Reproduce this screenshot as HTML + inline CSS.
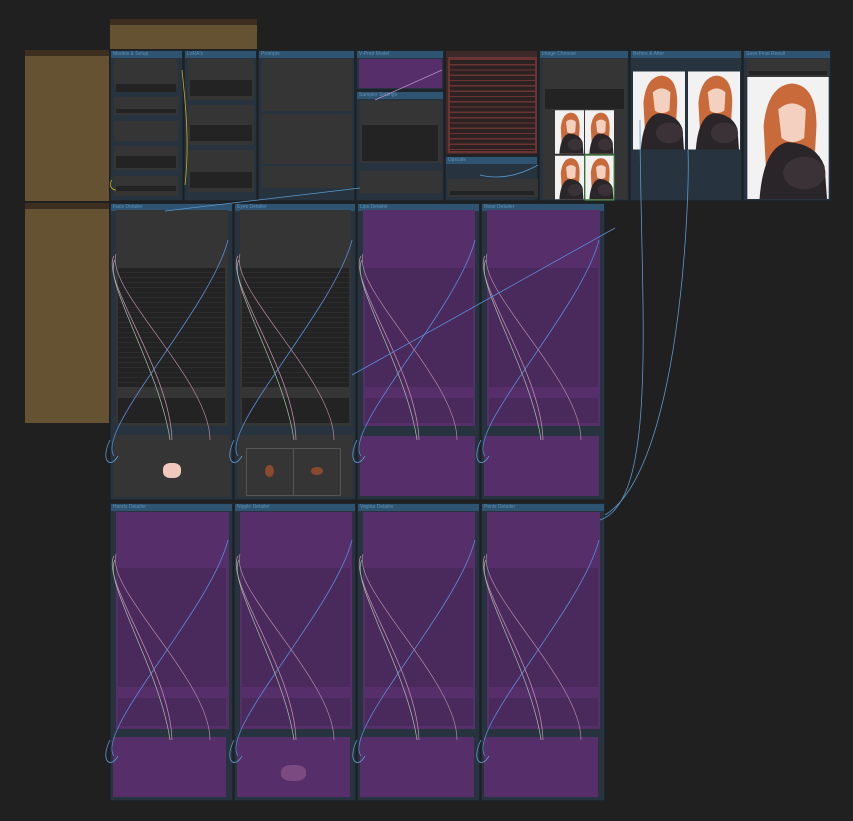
<!DOCTYPE html>
<html><head><meta charset="utf-8"><style>
*{margin:0;padding:0;box-sizing:border-box}
body{width:853px;height:821px;background:#202020;position:relative;overflow:hidden;font-family:"Liberation Sans",sans-serif}
div{position:absolute}
.br{background:#645233}
.brt{background:#3c2f1f}
.g{background:#27343f;border:1px solid #1d2730}
.gt{position:absolute;left:0;top:0;right:0;height:7px;background:#2f5471;color:#5c8fb5;font-size:5px;line-height:7px;padding-left:2px;white-space:nowrap;overflow:hidden}
.n{background:#353535}
.w{background:#232323}
.p{background:#552e6a}
.pi{background:#4a2a5c}
.img{background:#f2f2f2;overflow:hidden}
</style></head><body>
<!-- brown notes -->
<div class="br" style="left:110px;top:19px;width:147px;height:30px"></div>
<div class="brt" style="left:110px;top:19px;width:147px;height:6px"></div>
<div class="br" style="left:25px;top:50px;width:84px;height:151px"></div>
<div class="brt" style="left:25px;top:50px;width:84px;height:6px"></div>
<div class="br" style="left:25px;top:203px;width:84px;height:220px"></div>
<div class="brt" style="left:25px;top:203px;width:84px;height:6px"></div>

<!-- top row groups -->
<div class="g" style="left:110px;top:50px;width:73px;height:151px"><div class="gt">Models &amp; Setup</div></div>
<div class="n" style="left:114px;top:59px;width:64px;height:28px"></div><div class="w" style="left:116px;top:84px;width:60px;height:8px"></div>
<div class="n" style="left:114px;top:97px;width:64px;height:18px"></div><div class="w" style="left:116px;top:109px;width:60px;height:4px"></div>
<div class="n" style="left:114px;top:121px;width:64px;height:20px"></div>
<div class="n" style="left:114px;top:146px;width:64px;height:24px"></div><div class="w" style="left:116px;top:156px;width:60px;height:12px"></div>
<div class="n" style="left:114px;top:176px;width:64px;height:20px"></div><div class="w" style="left:116px;top:186px;width:60px;height:5px"></div>

<div class="g" style="left:184px;top:50px;width:73px;height:151px"><div class="gt">LoRA's</div></div>
<div class="n" style="left:188px;top:59px;width:66px;height:41px"></div><div class="w" style="left:190px;top:80px;width:62px;height:16px"></div>
<div class="n" style="left:188px;top:105px;width:66px;height:40px"></div><div class="w" style="left:190px;top:125px;width:62px;height:16px"></div>
<div class="n" style="left:188px;top:150px;width:66px;height:42px"></div><div class="w" style="left:190px;top:172px;width:62px;height:16px"></div>

<div class="g" style="left:258px;top:50px;width:97px;height:151px"><div class="gt">Prompts</div></div>
<div class="n" style="left:262px;top:59px;width:90px;height:52px"></div>
<div class="n" style="left:262px;top:114px;width:90px;height:50px"></div>
<div class="n" style="left:262px;top:166px;width:90px;height:22px"></div>

<div class="g" style="left:356px;top:50px;width:88px;height:40px"><div class="gt">V-Pred Model</div></div>
<div class="p" style="left:359px;top:59px;width:83px;height:29px"></div>
<div class="g" style="left:356px;top:91px;width:88px;height:110px"><div class="gt">Sampler Settings</div></div>
<div class="n" style="left:360px;top:101px;width:82px;height:62px"></div><div class="w" style="left:362px;top:125px;width:76px;height:36px"></div>
<div class="n" style="left:360px;top:171px;width:82px;height:22px"></div>

<div style="left:445px;top:50px;width:93px;height:105px;background:#3c2a2a;border:1px solid #2a1f1f"></div>
<div style="left:448px;top:57px;width:89px;height:96px;background:#6a3434"></div>
<div style="left:450px;top:60px;width:85px;height:91px;background:repeating-linear-gradient(#2c2222 0 4px,#6a3434 4px 5.3px)"></div>
<div class="g" style="left:445px;top:156px;width:93px;height:45px"><div class="gt">Upscale</div></div>
<div class="n" style="left:448px;top:179px;width:90px;height:18px"></div><div class="w" style="left:450px;top:191px;width:84px;height:4px"></div>

<div class="g" style="left:539px;top:50px;width:90px;height:151px"><div class="gt">Image Chooser</div></div>
<div class="n" style="left:543px;top:59px;width:84px;height:140px"></div>
<div class="w" style="left:545px;top:89px;width:79px;height:20px"></div>

<div class="g" style="left:630px;top:50px;width:112px;height:151px"><div class="gt">Before &amp; After</div></div>
<div class="g" style="left:743px;top:50px;width:88px;height:151px"><div class="gt">Save Final Result</div></div>
<div class="n" style="left:747px;top:59px;width:82px;height:18px"></div><div class="w" style="left:749px;top:71px;width:78px;height:4px"></div>

<!-- images -->
<svg style="position:absolute;left:0;top:0" width="853" height="821">
<defs>
<symbol id="girl" viewBox="0 0 100 150">
<rect width="100" height="150" fill="#f2f2f2"/>
<path d="M25 150 L20 60 Q25 10 55 8 Q85 10 85 60 L80 150Z" fill="#c96a3a"/>
<path d="M38 40 Q55 25 72 40 L70 75 Q55 85 42 75Z" fill="#f3d0c0"/>
<path d="M15 150 Q20 85 50 80 Q85 82 95 110 L98 150Z" fill="#2a2528"/>
<ellipse cx="70" cy="118" rx="26" ry="20" fill="#3a3236"/>
</symbol>
</defs>
<use href="#girl" x="555" y="110" width="29" height="44" preserveAspectRatio="none"/>
<use href="#girl" x="585" y="110" width="29" height="44" preserveAspectRatio="none"/>
<use href="#girl" x="555" y="155" width="29" height="45" preserveAspectRatio="none"/>
<use href="#girl" x="585" y="155" width="29" height="45" preserveAspectRatio="none"/>
<rect x="585" y="155" width="29" height="45" fill="none" stroke="#4c9a4c" stroke-width="1"/>
<use href="#girl" x="633" y="71" width="52" height="79" preserveAspectRatio="none"/>
<use href="#girl" x="688" y="71" width="52" height="79" preserveAspectRatio="none"/>
<use href="#girl" x="747" y="77" width="82" height="122" preserveAspectRatio="none"/>
</svg>

<!-- row 2 -->
<div class="g" style="left:110px;top:203px;width:123px;height:297px"><div class="gt">Face Detailer</div></div>
<div class="n" style="left:116px;top:210px;width:112px;height:216px"></div>
<div class="w" style="left:118px;top:268px;width:107px;height:119px;background:repeating-linear-gradient(#232323 0 4px,#2c2c2c 4px 5px)"></div>
<div class="w" style="left:118px;top:398px;width:107px;height:25px"></div>
<div class="n" style="left:114px;top:435px;width:116px;height:62px"></div>
<div style="left:163px;top:463px;width:18px;height:15px;background:#f0c8bc;border-radius:40%"></div>

<div class="g" style="left:234px;top:203px;width:122px;height:297px"><div class="gt">Eyes Detailer</div></div>
<div class="n" style="left:240px;top:210px;width:111px;height:216px"></div>
<div class="w" style="left:242px;top:268px;width:107px;height:119px;background:repeating-linear-gradient(#232323 0 4px,#2c2c2c 4px 5px)"></div>
<div class="w" style="left:242px;top:398px;width:107px;height:25px"></div>
<div class="n" style="left:238px;top:435px;width:115px;height:62px"></div>
<div style="left:246px;top:448px;width:95px;height:48px;border:1px solid #555"></div>
<div style="left:293px;top:448px;width:1px;height:48px;background:#555"></div>
<div style="left:265px;top:465px;width:9px;height:12px;background:#8a4a30;border-radius:50%"></div>
<div style="left:311px;top:467px;width:12px;height:8px;background:#8a4a30;border-radius:50%"></div>

<div class="g" style="left:357px;top:203px;width:123px;height:297px"><div class="gt">Lips Detailer</div></div>
<div class="p" style="left:363px;top:210px;width:112px;height:216px"></div>
<div class="pi" style="left:365px;top:268px;width:108px;height:119px"></div>
<div class="pi" style="left:365px;top:398px;width:108px;height:25px"></div>
<div class="p" style="left:360px;top:436px;width:115px;height:60px"></div>

<div class="g" style="left:481px;top:203px;width:124px;height:297px"><div class="gt">Nose Detailer</div></div>
<div class="p" style="left:487px;top:210px;width:113px;height:216px"></div>
<div class="pi" style="left:489px;top:268px;width:109px;height:119px"></div>
<div class="pi" style="left:489px;top:398px;width:109px;height:25px"></div>
<div class="p" style="left:484px;top:436px;width:115px;height:60px"></div>

<!-- row 3 -->
<div class="g" style="left:110px;top:503px;width:123px;height:298px"><div class="gt">Hands Detailer</div></div>
<div class="p" style="left:116px;top:512px;width:113px;height:217px"></div>
<div class="pi" style="left:118px;top:568px;width:108px;height:119px"></div>
<div class="pi" style="left:118px;top:698px;width:108px;height:28px"></div>
<div class="p" style="left:113px;top:737px;width:113px;height:60px"></div>

<div class="g" style="left:234px;top:503px;width:122px;height:298px"><div class="gt">Nipple Detailer</div></div>
<div class="p" style="left:240px;top:512px;width:112px;height:217px"></div>
<div class="pi" style="left:242px;top:568px;width:108px;height:119px"></div>
<div class="pi" style="left:242px;top:698px;width:108px;height:28px"></div>
<div class="p" style="left:237px;top:737px;width:113px;height:60px"></div>
<div style="left:281px;top:765px;width:25px;height:16px;background:#7a4a80;border-radius:40%"></div>

<div class="g" style="left:357px;top:503px;width:123px;height:298px"><div class="gt">Vagina Detailer</div></div>
<div class="p" style="left:363px;top:512px;width:112px;height:217px"></div>
<div class="pi" style="left:365px;top:568px;width:108px;height:119px"></div>
<div class="pi" style="left:365px;top:698px;width:108px;height:28px"></div>
<div class="p" style="left:360px;top:737px;width:114px;height:60px"></div>

<div class="g" style="left:481px;top:503px;width:124px;height:298px"><div class="gt">Penis Detailer</div></div>
<div class="p" style="left:487px;top:512px;width:113px;height:217px"></div>
<div class="pi" style="left:489px;top:568px;width:109px;height:119px"></div>
<div class="pi" style="left:489px;top:698px;width:109px;height:28px"></div>
<div class="p" style="left:484px;top:737px;width:114px;height:60px"></div>

<!-- wires -->
<svg style="position:absolute;left:0;top:0" width="853" height="821" fill="none">
<defs>
<symbol id="wr" overflow="visible">
<path d="M4 246 C-15 220 100 100 118 30" stroke="#5a8ad8" stroke-width="0.8"/>
<path d="M4 46 C-10 70 60 160 62 230" stroke="#b88aa8" stroke-width="0.8"/>
<path d="M5 50 C-8 70 50 160 60 230" stroke="#a8c0a8" stroke-width="0.7"/>
<path d="M6 44 C-5 80 100 170 100 230" stroke="#b88aa8" stroke-width="0.7"/>
<path d="M0 230 C-10 250 0 260 8 246" stroke="#5a9ad0" stroke-width="0.8"/>
</symbol>
</defs>
<use href="#wr" x="110" y="210"/><use href="#wr" x="234" y="210"/>
<use href="#wr" x="357" y="210"/><use href="#wr" x="481" y="210"/>
<use href="#wr" x="110" y="510"/><use href="#wr" x="234" y="510"/>
<use href="#wr" x="357" y="510"/><use href="#wr" x="481" y="510"/>
<path d="M352 375 L615 228" stroke="#5a8ad8" stroke-width="0.8"/>
<path d="M165 211 L360 188" stroke="#5a9ad0" stroke-width="0.8"/>
<path d="M600 520 C660 500 640 300 640 120" stroke="#5a9ad0" stroke-width="0.8"/>
<path d="M605 515 C680 470 690 200 688 150" stroke="#5a9ad0" stroke-width="0.8"/>
<path d="M375 100 L442 70" stroke="#b88ad0" stroke-width="0.8"/>
<path d="M182 70 C185 100 190 140 185 185" stroke="#c8b020" stroke-width="0.8"/>
<path d="M112 180 C108 185 112 190 116 190" stroke="#c8b020" stroke-width="0.8"/>
<path d="M480 175 C500 180 520 175 538 165" stroke="#5a9ad0" stroke-width="0.8"/>
</svg>
</body></html>
